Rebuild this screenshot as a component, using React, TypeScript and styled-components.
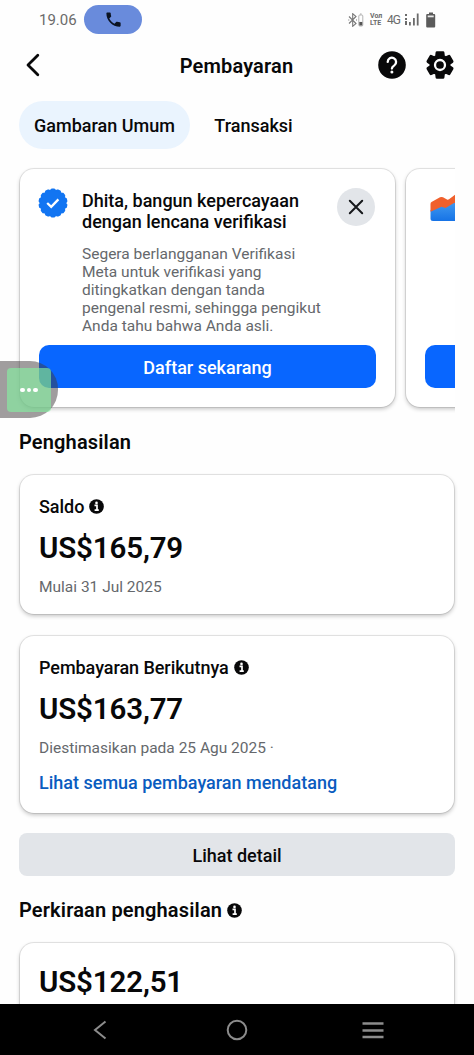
import React from 'react';
import styled, { createGlobalStyle } from 'styled-components';

const GlobalStyle = createGlobalStyle`
  * { box-sizing: border-box; }
  body { margin: 0; background: #fff; font-family: Roboto, "Liberation Sans", sans-serif; color: #080809; }
  button { font: inherit; color: inherit; border: 0; padding: 0; background: none; }
  h1, h2, p { margin: 0; }
  svg { display: block; flex: none; }
`;

const Screen = styled.div`
  position: relative;
  width: 474px;
  height: 1055px;
  display: flex;
  flex-direction: column;
  overflow: hidden;
  background: #fefefe;
`;

const StatusBar = styled.div`
  height: 39px;
  flex: none;
  display: flex;
  align-items: center;
  padding: 0 38px 0 39px;
  color: #6b6b6b;
`;

const Clock = styled.span`
  width: 45px;
  font-size: 15px;
  line-height: 20px;
  padding-top: 1px;
`;

const CallPill = styled.div`
  width: 58px;
  height: 29px;
  border-radius: 15px;
  background: #698bdc;
  display: flex;
  align-items: center;
  justify-content: center;
`;

const StatusIcons = styled.div`
  margin-left: auto;
  display: flex;
  align-items: center;
`;

const Volte = styled.div`
  display: flex;
  flex-direction: column;
  width: 13px;
  margin: 0 4px 0 6px;
  font-size: 7px;
  font-weight: 700;
  line-height: 7px;
  white-space: nowrap;
`;

const Network = styled.span`
  width: 14px;
  margin-right: 4px;
  font-size: 12px;
  line-height: 14px;
  letter-spacing: -1px;
`;

const Header = styled.header`
  height: 52px;
  flex: none;
  display: grid;
  grid-template-columns: 97px 1fr 97px;
  align-items: center;
`;

const BackButton = styled.button`
  padding-left: 24px;
`;

const Title = styled.h1`
  text-align: center;
  font-size: 20px;
  font-weight: 600;
  letter-spacing: 0.15px;
  line-height: 24px;
  padding: 2px 1px 0 0;
`;

const HeaderActions = styled.div`
  display: flex;
  gap: 20px;
`;

const Tabs = styled.nav`
  display: flex;
  height: 48px;
  flex: none;
  margin: 10px 0 0 19px;
`;

const Tab = styled.button<{ $active?: boolean; $width: number }>`
  width: ${p => p.$width}px;
  height: 48px;
  border-radius: 24px;
  background: ${p => (p.$active ? '#eaf4fe' : 'transparent')};
  font-size: 18px;
  font-weight: 500;
  padding-top: 1px;
`;

const Carousel = styled.div`
  width: 455px;
  height: 265px;
  flex: none;
  margin-top: 16px;
  padding: 4px 0 0 20px;
  display: flex;
  gap: 11px;
  overflow: hidden;
`;

const cardSurface = `
  border-radius: 14px;
  background: #fff;
  box-shadow: 0 0 0 1px rgba(0, 0, 0, 0.09), 0 2px 4px rgba(0, 0, 0, 0.24);
`;

const PromoCard = styled.section`
  ${cardSurface}
  width: 375px;
  height: 238px;
  flex: none;
  padding: 19px 19px 0;
  display: flex;
  flex-direction: column;
`;

const PromoTop = styled.div`
  height: 157px;
  flex: none;
  display: flex;
  align-items: flex-start;
  margin-left: -1px;
`;

const PromoText = styled.div`
  width: 255px;
  margin-left: 14px;
  white-space: nowrap;
`;

const PromoTitle = styled.h2`
  font-size: 18px;
  font-weight: 500;
  line-height: 21px;
  padding-top: 2px;
`;

const PromoBody = styled.p`
  margin-top: 13px;
  font-size: 15.5px;
  line-height: 18px;
  color: #65686c;
`;

const CloseButton = styled.button`
  width: 38px;
  height: 38px;
  border-radius: 50%;
  background: #e2e5e9;
  display: flex;
  align-items: center;
  justify-content: center;
`;

const ActionButton = styled.button<{ $tone: 'primary' | 'secondary' }>`
  height: 43px;
  flex: none;
  border-radius: ${p => (p.$tone === 'primary' ? 10 : 8)}px;
  background: ${p => (p.$tone === 'primary' ? '#0866ff' : '#e2e5e9')};
  color: ${p => (p.$tone === 'primary' ? '#fff' : '#080809')};
  font-size: 18px;
  font-weight: 500;
  padding-top: 1px;
`;

const SectionTitle = styled.h2`
  display: flex;
  align-items: center;
  gap: 5px;
  height: 24px;
  flex: none;
  margin-left: 19px;
  font-size: 20px;
  font-weight: 600;
  letter-spacing: 0.15px;
`;

const BalanceCard = styled.section<{ $height: number; $top: number }>`
  ${cardSurface}
  height: ${p => p.$height}px;
  flex: none;
  margin: ${p => p.$top}px 20px 0;
  padding: 19px 19px 0;
`;

const Label = styled.div`
  display: flex;
  align-items: center;
  gap: 5px;
  height: 24px;
  margin-bottom: 10px;
  font-size: 18px;
  font-weight: 500;
  letter-spacing: -0.05px;
`;

const Amount = styled.div`
  height: 40px;
  font-size: 29.5px;
  font-weight: 600;
  line-height: 41px;
  letter-spacing: -0.15px;
`;

const Note = styled.div`
  height: 20px;
  margin-top: 9px;
  font-size: 15.5px;
  line-height: 20px;
  color: #65686c;
`;

const TextLink = styled.a`
  display: block;
  margin-top: 13px;
  font-size: 18px;
  font-weight: 500;
  line-height: 24px;
  color: #0a5cbf;
`;

const DetailRow = styled.div`
  display: flex;
  flex-direction: column;
  flex: none;
  margin: 20px 19px 22px;
`;

const NavBar = styled.footer`
  position: absolute;
  left: 0;
  right: 0;
  bottom: 0;
  height: 51px;
  background: #000;
  display: grid;
  grid-template-columns: 168px 106px 166px;
  align-items: center;
  justify-items: center;
  padding-left: 16px;
`;

const NavSlot = styled.button`
  display: flex;
`;

const FloatingHandle = styled.div`
  position: absolute;
  left: 0;
  top: 361px;
  width: 58px;
  height: 57px;
  padding: 7px 0 0 7px;
  border-radius: 0 28px 28px 0;
  background: rgba(65, 60, 62, 0.5);
`;

const HandleFace = styled.div`
  width: 44px;
  height: 44px;
  border-radius: 4px;
  background: rgba(132, 242, 162, 0.62);
  display: flex;
  align-items: center;
  justify-content: center;
  gap: 1.8px;
`;

const Dot = styled.i`
  width: 4.8px;
  height: 4.8px;
  border-radius: 50%;
  background: #fff;
`;

const polar = (c: number, r: number, deg: number) => {
  const a = (deg * Math.PI) / 180;
  return `${(c + r * Math.cos(a)).toFixed(2)},${(c + r * Math.sin(a)).toFixed(2)}`;
};

const gearPoints = [30, 90, 150, 210, 270, 330]
  .flatMap(a => [polar(14, 9.3, a - 22), polar(14, 12.6, a - 14), polar(14, 12.6, a + 14), polar(14, 9.3, a + 22)])
  .join(' ');

const badgePoints = Array.from({ length: 14 }, (_, i) => (i * 360) / 14 - 90)
  .flatMap(a => [polar(15, 12.5, a - 12.86), polar(15, 13.8, a - 5), polar(15, 13.8, a + 5)])
  .join(' ');

const InfoIcon = () => (
  <svg width="15" height="15" viewBox="0 0 15 15">
    <circle cx="7.5" cy="7.5" r="7.3" fill="#080809" />
    <circle cx="7.5" cy="3.9" r="1.3" fill="#fff" />
    <path d="M5.5 6.4h2.500v4.800M5.600 11.200h4.200" stroke="#fff" strokeWidth="1.700" fill="none" />
  </svg>
);

export default function App() {
  return (
    <Screen>
      <GlobalStyle />
      <StatusBar>
        <Clock>19.06</Clock>
        <CallPill>
          <svg width="19" height="19" viewBox="0 0 24 24">
            <path fill="#0b1322" d="M6.62 10.79c1.44 2.83 3.76 5.14 6.59 6.59l2.2-2.2c.27-.27.67-.36 1.02-.24 1.12.37 2.33.57 3.57.57.55 0 1 .45 1 1V20c0 .55-.45 1-1 1-9.39 0-17-7.61-17-17 0-.55.45-1 1-1h3.5c.55 0 1 .45 1 1 0 1.25.2 2.45.57 3.57.11.35.03.74-.25 1.02l-2.2 2.2z" />
          </svg>
        </CallPill>
        <StatusIcons>
          <svg width="16" height="14" viewBox="0 0 16 14" fill="none" stroke="#777" strokeWidth="1.1">
            <path d="M1 3.500l7 7L4.700 13.300V.7L8 3.500l-7 7" />
            <path d="M.3 7h1M8 7h1" />
            <rect x="10.800" y="2" width="4" height="11" rx="1" stroke="#aaa" strokeWidth=".9" />
            <path d="M12 1h1.600" stroke="#aaa" />
            <path d="M11.300 10.700h3" stroke="#555" strokeWidth="3.500" />
          </svg>
          <Volte><span>Voл</span><span>LTE</span></Volte>
          <Network>4G</Network>
          <svg width="14" height="13" viewBox="0 0 14 13" fill="#6b6b6b">
            <path d="M0 1h2v2H0zM0 5h2v2H0zM0 8h2v4H0zM4 9h1.800v3.500H4zM8 5h1.800v7.500H8zM11.800.5h1.800v12h-1.800z" />
          </svg>
          <svg width="17" height="16" viewBox="1 0 17 16">
            <path d="M11 .5h4v1.500h1.200q1 0 1 1V14.500q0 1-1 1H9.200q-1 0-1-1V3q0-1 1-1H11z" fill="#5b5b5b" />
            <path d="M9.700 3.500h6v1.800h-6z" fill="#e8e8e8" />
          </svg>
        </StatusIcons>
      </StatusBar>

      <Header>
        <BackButton aria-label="Kembali">
          <svg width="18" height="26" viewBox="0 0 18 26">
            <path d="M13.800 3.300L4 13l9.800 9.700" fill="none" stroke="#080809" strokeWidth="2.800" strokeLinecap="round" strokeLinejoin="round" />
          </svg>
        </BackButton>
        <Title>Pembayaran</Title>
        <HeaderActions>
          <svg width="29" height="28" viewBox="0 0 29 28">
            <circle cx="15" cy="14" r="13.800" fill="#080809" />
            <path d="M10.700 10.900a4.200 4.200 0 1 1 6.600 3.500c-1.700 1.100-2.400 1.600-2.400 3.100" fill="none" stroke="#fff" strokeWidth="2.300" strokeLinecap="round" />
            <circle cx="14.900" cy="21" r="1.500" fill="#fff" />
          </svg>
          <svg width="28" height="28" viewBox="0 0 28 28">
            <polygon points={gearPoints} fill="#080809" stroke="#080809" strokeWidth="2.800" strokeLinejoin="round" />
            <circle cx="14" cy="14" r="5" fill="none" stroke="#fff" strokeWidth="2.300" />
          </svg>
        </HeaderActions>
      </Header>

      <Tabs>
        <Tab $active $width={171}>Gambaran Umum</Tab>
        <Tab $width={127}>Transaksi</Tab>
      </Tabs>

      <Carousel>
        <PromoCard>
          <PromoTop>
            <svg width="30" height="30" viewBox="0 0 30 30">
              <polygon points={badgePoints} fill="#1275f2" stroke="#1275f2" strokeWidth="1.500" strokeLinejoin="round" />
              <path d="M9.200 15l4 3.800 7.200-7.400" fill="none" stroke="#fff" strokeWidth="2.300" />
            </svg>
            <PromoText>
              <PromoTitle>Dhita, bangun kepercayaan<br />dengan lencana verifikasi</PromoTitle>
              <PromoBody>
                Segera berlangganan Verifikasi<br />Meta untuk verifikasi yang<br />ditingkatkan dengan tanda<br />pengenal resmi, sehingga pengikut<br />Anda tahu bahwa Anda asli.
              </PromoBody>
            </PromoText>
            <CloseButton aria-label="Tutup">
              <svg width="18" height="18" viewBox="0 0 18 18">
                <path d="M2.800 2.800l12.400 12.400M15.200 2.800L2.800 15.200" stroke="#16181b" strokeWidth="2" strokeLinecap="round" />
              </svg>
            </CloseButton>
          </PromoTop>
          <ActionButton $tone="primary">Daftar sekarang</ActionButton>
        </PromoCard>
        <PromoCard>
          <PromoTop>
            <svg width="36" height="36" viewBox="0 0 36 36">
              <defs>
                <linearGradient id="area" x1="0" y1="0" x2="0" y2="1">
                  <stop offset="0" stopColor="#48a0f2" />
                  <stop offset="1" stopColor="#1673e6" />
                </linearGradient>
              </defs>
              <path d="M6.500 22l24.500-9 5-2v22H9q-2.500 0-2.500-2.500z" fill="url(#area)" />
              <path d="M6.500 16q0-1.300 1-2l8.500-4.700q1.500-.8 3 0l4 2.200q1 .5 2-.3L36 3v12.500L30 15l-8.500 5-4-1.200-11 5z" fill="#f0602c" />
            </svg>
          </PromoTop>
          <ActionButton $tone="primary" aria-label="Lanjutkan" />
        </PromoCard>
      </Carousel>

      <SectionTitle>Penghasilan</SectionTitle>

      <BalanceCard $height={139} $top={21}>
        <Label>Saldo <InfoIcon /></Label>
        <Amount>US$165,79</Amount>
        <Note>Mulai 31 Jul 2025</Note>
      </BalanceCard>

      <BalanceCard $height={177} $top={22}>
        <Label>Pembayaran Berikutnya <InfoIcon /></Label>
        <Amount>US$163,77</Amount>
        <Note>Diestimasikan pada 25 Agu 2025 ·</Note>
        <TextLink>Lihat semua pembayaran mendatang</TextLink>
      </BalanceCard>

      <DetailRow>
        <ActionButton $tone="secondary">Lihat detail</ActionButton>
      </DetailRow>

      <SectionTitle>Perkiraan penghasilan <InfoIcon /></SectionTitle>

      <BalanceCard $height={139} $top={21}>
        <Amount>US$122,51</Amount>
      </BalanceCard>

      <NavBar>
        <NavSlot aria-label="Kembali">
          <svg width="14" height="20" viewBox="0 0 14 20">
            <path d="M12.500 1.500L2 10l10.500 8.500" fill="none" stroke="#8c8c8c" strokeWidth="2" />
          </svg>
        </NavSlot>
        <NavSlot aria-label="Beranda">
          <svg width="22" height="22" viewBox="0 0 22 22">
            <circle cx="11" cy="11" r="9.300" fill="none" stroke="#8c8c8c" strokeWidth="2" />
          </svg>
        </NavSlot>
        <NavSlot aria-label="Menu">
          <svg width="22" height="18" viewBox="0 0 22 18">
            <path d="M0.500 2.500h21M0.500 9.500h21M0.500 16h21" stroke="#8c8c8c" strokeWidth="2.300" />
          </svg>
        </NavSlot>
      </NavBar>

      <FloatingHandle>
        <HandleFace><Dot /><Dot /><Dot /></HandleFace>
      </FloatingHandle>
    </Screen>
  );
}
